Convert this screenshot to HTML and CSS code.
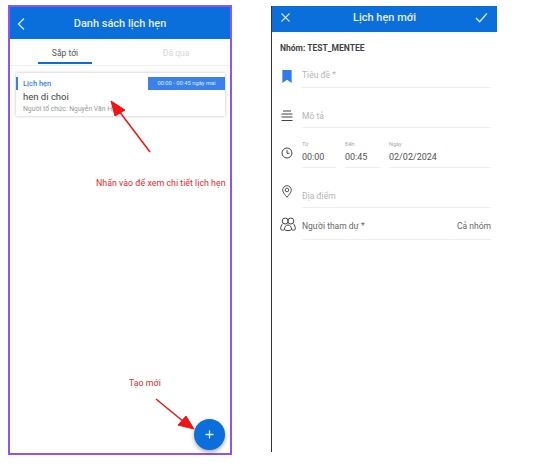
FILE: index.html
```html
<!DOCTYPE html>
<html>
    <head>
        <meta name="viewport" content="width=device-width, initial-scale=1.0">
        <title>Lich hen</title>
        <link rel="stylesheet" href="styles.css">
    </head>
    <body>
        <div class="phone list">
            <div class="topbar">
                <svg class="back" width="10" height="14" viewBox="0 0 10 14"><path d="M8 1.5 2.5 7 8 12.5" fill="none" stroke="#cfe3fa" stroke-width="1.4"/></svg>
                <span class="topbar-title">Danh sách lịch hẹn</span>
            </div>
            <div class="tabs">
                <div class="tab active"><span>Sắp tới</span></div>
                <div class="tab"><span>Đã qua</span></div>
            </div>
            <div class="card">
                <div class="card-top">
                    <span class="card-type">Lịch hẹn</span>
                    <span class="card-time">00:00 - 00:45 ngày mai</span>
                </div>
                <div class="card-name">hen di choi</div>
                <div class="card-owner">Người tổ chức: Nguyễn Văn Hải</div>
            </div>
            <div class="fab">
                <svg width="9" height="9" viewBox="0 0 9 9"><path d="M4.5 0.5v8M0.5 4.5h8" stroke="#dcebfb" stroke-width="1.3"/></svg>
            </div>
            <svg class="arrows" width="224" height="450" viewBox="0 0 224 450">
                <path d="M140 145 109 104" stroke="#f01414" stroke-width="1.5"/>
                <path d="M101 94 115 103 105 109Z" fill="#f01414" stroke="#f01414"/>
                <path d="M146 392 174 415" stroke="#f01414" stroke-width="1.5"/>
                <path d="M184 422 176 409 168 418Z" fill="#f01414" stroke="#f01414"/>
            </svg>
            <span class="note note-detail">Nhấn vào để xem chi tiết lịch hẹn</span>
            <span class="note note-new">Tạo mới</span>
        </div>
        <div class="phone form">
            <div class="topbar small">
                <svg width="9" height="9" viewBox="0 0 9 9"><path d="M.5.5l8 8M8.5.5l-8 8" stroke="#cfe3fa" stroke-width="1.1"/></svg>
                <span class="topbar-title">Lịch hẹn mới</span>
                <svg width="13" height="11" viewBox="0 0 14 12"><path d="M1 6.5 5 10.5 13 1.5" fill="none" stroke="#dcebfb" stroke-width="1.5"/></svg>
            </div>
            <div class="group">Nhóm: TEST_MENTEE</div>
            <div class="row row-title">
                <svg class="ico" width="12" height="13" viewBox="0 0 12 14"><path d="M1 0h10v14L6 10.5 1 14Z" fill="#2f7de8"/></svg>
                <div class="field hint">Tiêu đề *</div>
            </div>
            <div class="row row-desc">
                <svg class="ico" width="12" height="12" viewBox="0 0 12 12"><path d="M2 1h8M0.5 4h11M0.5 7h11M0.5 10.5h11" stroke="#444" stroke-width="1.2"/></svg>
                <div class="field hint">Mô tả</div>
            </div>
            <div class="row row-time">
                <svg class="ico" width="12" height="12" viewBox="0 0 12 12"><circle cx="6" cy="6" r="5" fill="none" stroke="#444" stroke-width="1"/><path d="M6 3v3.3h2.5" fill="none" stroke="#444"/></svg>
                <div class="times">
                    <div class="time t1"><small>Từ</small>00:00</div>
                    <div class="time t2"><small>Đến</small>00:45</div>
                    <div class="time t3"><small>Ngày</small>02/02/2024</div>
                </div>
            </div>
            <div class="row row-place">
                <svg class="ico" width="10" height="13" viewBox="0 0 10 13"><path d="M5 12.3C3 9.5 .7 7.5 .7 5a4.3 4.3 0 0 1 8.6 0C9.3 7.5 7 9.5 5 12.3Z" fill="none" stroke="#444" stroke-width=".9"/><circle cx="5" cy="5" r="1.8" fill="none" stroke="#444" stroke-width=".9"/></svg>
                <div class="field hint">Địa điểm</div>
            </div>
            <div class="row row-people">
                <svg class="ico" width="16" height="15" viewBox="0 0 16 15"><g fill="none" stroke="#444" stroke-width="1"><circle cx="5.2" cy="4" r="3"/><circle cx="10.8" cy="4" r="3"/><path d="M3 6.5C1 8 .6 10 .8 12.5c1 .8 3 .8 3.7.2M13 6.5c2 1.5 2.4 3.5 2.2 6-1 .8-3 .8-3.7.2"/><path d="M8 8c-2 0-3.5 1.5-3.5 4.5 1 1.5 6 1.500 7 0C11.5 9.500 10 8 8 8Z"/></g></svg>
                <div class="field people">
                    <span>Người tham dự *</span>
                    <span>Cả nhóm</span>
                </div>
            </div>
        </div>
    </body>
</html>
```

FILE: styles.css
```css
body {
    margin: 0;
    padding: 5px 0 0 8px;
    display: flex;
    align-items: flex-start;
    gap: 39px;
    background-color: #fff;
    font-family: "Roboto", "Liberation Sans", sans-serif;
    color: #333;
}
.phone {
    position: relative;
    box-sizing: border-box;
    background-color: #fff;
}
.list {
    width: 224px;
    height: 450px;
    border: 2px solid #8d55f2;
}
.form {
    width: 226px;
    height: 446px;
    margin-top: 1px;
    border-left: 1px solid #333;
}

.topbar {
    height: 32px;
    display: flex;
    align-items: center;
    justify-content: center;
    position: relative;
    background-color: #0a6edb;
    color: #e6f0fb;
}
.topbar .back {
    position: absolute;
    left: 6px;
    top: 10px;
}
.topbar-title {
    font-size: 11px;
    font-weight: 500;
    padding-top: 1px;
}
.topbar.small {
    height: 26px;
    box-sizing: border-box;
    justify-content: space-between;
    padding: 0 9px 4px 9px;
}
.topbar.small .topbar-title {
    padding: 0 0 0 4px;
}

.tabs {
    display: flex;
    height: 26px;
    border-bottom: 1px solid #f0f0f0;
}
.tab {
    flex: 1;
    display: flex;
    justify-content: center;
    font-size: 8.5px;
    color: #d6d6d6;
}
.tab span {
    width: 54px;
    text-align: center;
    padding-top: 9px;
    margin-left: 2px;
}
.tab.active {
    color: #555;
}
.tab.active span {
    height: 25px;
    margin-left: 0;
    box-sizing: border-box;
    border-bottom: 2px solid #0a6edb;
}

.card {
    margin: 7px 5px 0 6px;
    height: 43px;
    padding: 4px 0 0 0;
    box-sizing: border-box;
    box-shadow: 0 0 3px rgba(0,0,0,0.25);
    font-size: 7px;
}
.card-top {
    display: flex;
    justify-content: space-between;
    align-items: center;
    border-left: 2px solid #3a82ea;
    padding-left: 5px;
    height: 13px;
}
.card-type {
    color: #3a82ea;
    font-size: 7.5px;
    font-weight: 500;
}
.card-time {
    width: 77px;
    height: 13px;
    line-height: 13px;
    text-align: center;
    font-size: 5.8px;
    background-color: #3a82ea;
    color: #dce9fb;
}
.card-name {
    font-size: 9.5px;
    margin: 1px 0 0 7px;
    color: #444;
}
.card-owner {
    font-size: 6.8px;
    margin: 3px 0 0 7px;
    color: #999;
}

.fab {
    position: absolute;
    left: 184px;
    top: 412px;
    width: 31px;
    height: 31px;
    border-radius: 50%;
    background-color: #0a6edb;
    box-shadow: 0 2px 4px rgba(0,0,0,0.35);
    display: flex;
    align-items: center;
    justify-content: center;
}
.arrows {
    position: absolute;
    left: 0;
    top: 0;
}
.note {
    position: absolute;
    font-size: 8.85px;
    color: #ee2a2a;
    white-space: nowrap;
}
.note-detail {
    left: 86px;
    top: 171px;
}
.note-new {
    left: 119px;
    top: 371px;
}

.group {
    font-size: 8.5px;
    font-weight: 700;
    color: #444;
    padding: 11px 0 0 8px;
    height: 26px;
    box-sizing: border-box;
}
.row {
    display: flex;
    padding-left: 9px;
    gap: 9px;
    box-sizing: border-box;
}
.ico {
    flex: none;
    width: 12px;
}
.field, .times {
    flex: 1;
    margin-right: 6px;
    border-bottom: 1px solid #eee;
    font-size: 8.5px;
}
.hint {
    color: #b5b5b5;
}
.row-title {
    height: 30px;
    padding-top: 12px;
}
.row-desc {
    margin-top: 10px;
    height: 30px;
    padding-top: 12px;
}
.row-desc .field {
    padding-top: 1px;
}
.row-time {
    height: 40px;
    padding-top: 19px;
}
.row-time .times {
    display: flex;
    border-bottom: none;
    margin-top: -6px;
    gap: 9px;
}
.time {
    height: 27px;
    box-sizing: border-box;
    border-bottom: 1px solid #eee;
    color: #555;
    font-size: 9px;
}
.time small {
    display: block;
    font-size: 5.5px;
    color: #aaa;
    margin-bottom: 5px;
}
.t1 { width: 34px; }
.t2 { width: 35px; }
.t3 { flex: 1; }
.row-place {
    height: 40px;
    padding-top: 17px;
}
.row-place .field {
    padding-top: 6px;
}
.row-people {
    height: 32px;
    padding-top: 9px;
}
.row-people .ico {
    width: 16px;
    margin-left: -1px;
    margin-right: -3px;
}
.row-people .field {
    display: flex;
    justify-content: space-between;
    color: #666;
    padding-top: 4px;
}
```
